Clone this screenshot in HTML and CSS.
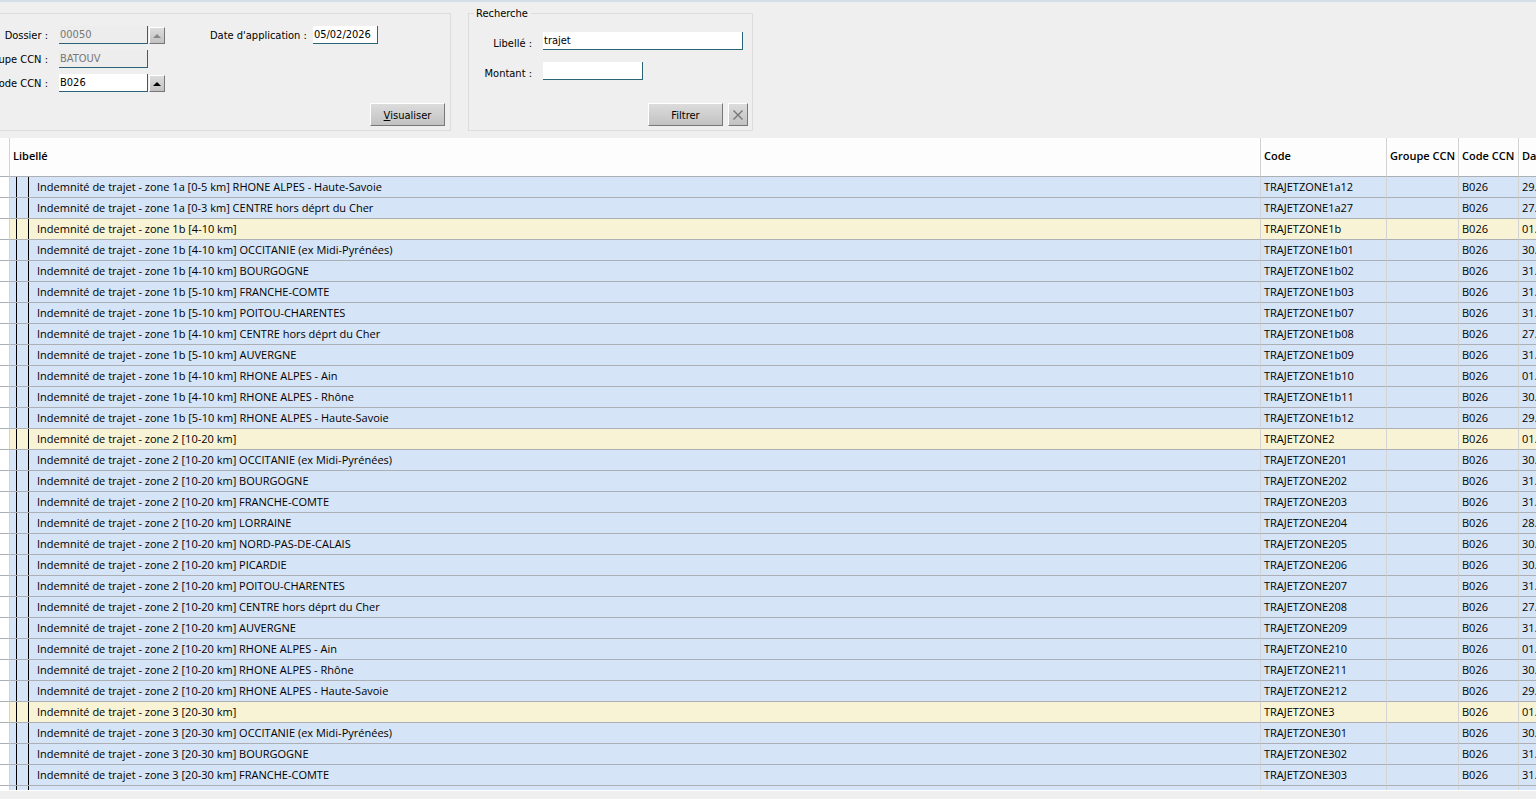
FILE: index.html
```
<!DOCTYPE html>
<html lang="fr">
<head>
    <meta charset="UTF-8">
    <meta name="viewport" content="width=device-width, initial-scale=1.0">
    <title>Convention collective</title>
    <link rel="stylesheet" href="styles.css">
</head>
<body>

    <!-- Critères -->
    <form class="filters">
        <fieldset class="panel panel-dossier">
            <div class="columns">
                <div class="fields">
                    <div class="field">
                        <label for="dossier">Dossier :</label>
                        <input type="text" id="dossier" value="00050" disabled>
                        <button type="button" class="btn pick" aria-label="Dossier" disabled><svg width="8" height="4" viewBox="0 0 8 4"><path d="M4 0l4 4H0z"/></svg></button>
                    </div>
                    <div class="field">
                        <label for="groupe">Groupe CCN :</label>
                        <input type="text" id="groupe" value="BATOUV" disabled>
                    </div>
                    <div class="field">
                        <label for="code">Code CCN :</label>
                        <input type="text" id="code" value="B026">
                        <button type="button" class="btn pick" aria-label="Code CCN"><svg width="8" height="4" viewBox="0 0 8 4"><path d="M4 0l4 4H0z"/></svg></button>
                    </div>
                </div>
                <div class="field field-date">
                    <label for="date">Date d'application :</label>
                    <input type="text" id="date" value="05/02/2026">
                </div>
            </div>
            <div class="actions">
                <button type="button" class="btn"><u>V</u>isualiser</button>
            </div>
        </fieldset>

        <fieldset class="panel panel-search">
            <legend>Recherche</legend>
            <div class="fields">
                <div class="field">
                    <label for="libelle">Libellé :</label>
                    <input type="text" id="libelle" value="trajet">
                </div>
                <div class="field">
                    <label for="montant">Montant :</label>
                    <input type="text" id="montant">
                </div>
            </div>
            <div class="actions">
                <button type="button" class="btn">Filtrer</button>
                <button type="button" class="btn clear" aria-label="Effacer"><svg width="10" height="10" viewBox="0 0 10 10"><path d="M.5.5l9 9M9.5.5l-9 9"/></svg></button>
            </div>
        </fieldset>
    </form>

    <!-- Liste des indemnités -->
    <div class="grid">
        <table>
            <colgroup>
                <col class="col-mark"><col><col class="col-code"><col class="col-groupe"><col class="col-ccn"><col class="col-date">
            </colgroup>
            <thead>
                <tr><th></th><th>Libellé</th><th>Code</th><th>Groupe CCN</th><th>Code CCN</th><th>Dat</th></tr>
            </thead>
            <tbody>
                <tr><td></td><td>Indemnité de trajet - zone 1a [0-5 km] RHONE ALPES - Haute-Savoie</td><td>TRAJETZONE1a12</td><td></td><td>B026</td><td>29.</td></tr>
                <tr><td></td><td>Indemnité de trajet - zone 1a [0-3 km] CENTRE hors déprt du Cher</td><td>TRAJETZONE1a27</td><td></td><td>B026</td><td>27.</td></tr>
                <tr class="main"><td></td><td>Indemnité de trajet - zone 1b [4-10 km]</td><td>TRAJETZONE1b</td><td></td><td>B026</td><td>01.</td></tr>
                <tr><td></td><td>Indemnité de trajet - zone 1b [4-10 km] OCCITANIE (ex Midi-Pyrénées)</td><td>TRAJETZONE1b01</td><td></td><td>B026</td><td>30.</td></tr>
                <tr><td></td><td>Indemnité de trajet - zone 1b [4-10 km] BOURGOGNE</td><td>TRAJETZONE1b02</td><td></td><td>B026</td><td>31.</td></tr>
                <tr><td></td><td>Indemnité de trajet - zone 1b [5-10 km] FRANCHE-COMTE</td><td>TRAJETZONE1b03</td><td></td><td>B026</td><td>31.</td></tr>
                <tr><td></td><td>Indemnité de trajet - zone 1b [5-10 km] POITOU-CHARENTES</td><td>TRAJETZONE1b07</td><td></td><td>B026</td><td>31.</td></tr>
                <tr><td></td><td>Indemnité de trajet - zone 1b [4-10 km] CENTRE hors déprt du Cher</td><td>TRAJETZONE1b08</td><td></td><td>B026</td><td>27.</td></tr>
                <tr><td></td><td>Indemnité de trajet - zone 1b [5-10 km] AUVERGNE</td><td>TRAJETZONE1b09</td><td></td><td>B026</td><td>31.</td></tr>
                <tr><td></td><td>Indemnité de trajet - zone 1b [4-10 km] RHONE ALPES - Ain</td><td>TRAJETZONE1b10</td><td></td><td>B026</td><td>01.</td></tr>
                <tr><td></td><td>Indemnité de trajet - zone 1b [4-10 km] RHONE ALPES - Rhône</td><td>TRAJETZONE1b11</td><td></td><td>B026</td><td>30.</td></tr>
                <tr><td></td><td>Indemnité de trajet - zone 1b [5-10 km] RHONE ALPES - Haute-Savoie</td><td>TRAJETZONE1b12</td><td></td><td>B026</td><td>29.</td></tr>
                <tr class="main"><td></td><td>Indemnité de trajet - zone 2 [10-20 km]</td><td>TRAJETZONE2</td><td></td><td>B026</td><td>01.</td></tr>
                <tr><td></td><td>Indemnité de trajet - zone 2 [10-20 km] OCCITANIE (ex Midi-Pyrénées)</td><td>TRAJETZONE201</td><td></td><td>B026</td><td>30.</td></tr>
                <tr><td></td><td>Indemnité de trajet - zone 2 [10-20 km] BOURGOGNE</td><td>TRAJETZONE202</td><td></td><td>B026</td><td>31.</td></tr>
                <tr><td></td><td>Indemnité de trajet - zone 2 [10-20 km] FRANCHE-COMTE</td><td>TRAJETZONE203</td><td></td><td>B026</td><td>31.</td></tr>
                <tr><td></td><td>Indemnité de trajet - zone 2 [10-20 km] LORRAINE</td><td>TRAJETZONE204</td><td></td><td>B026</td><td>28.</td></tr>
                <tr><td></td><td>Indemnité de trajet - zone 2 [10-20 km] NORD-PAS-DE-CALAIS</td><td>TRAJETZONE205</td><td></td><td>B026</td><td>30.</td></tr>
                <tr><td></td><td>Indemnité de trajet - zone 2 [10-20 km] PICARDIE</td><td>TRAJETZONE206</td><td></td><td>B026</td><td>30.</td></tr>
                <tr><td></td><td>Indemnité de trajet - zone 2 [10-20 km] POITOU-CHARENTES</td><td>TRAJETZONE207</td><td></td><td>B026</td><td>31.</td></tr>
                <tr><td></td><td>Indemnité de trajet - zone 2 [10-20 km] CENTRE hors déprt du Cher</td><td>TRAJETZONE208</td><td></td><td>B026</td><td>27.</td></tr>
                <tr><td></td><td>Indemnité de trajet - zone 2 [10-20 km] AUVERGNE</td><td>TRAJETZONE209</td><td></td><td>B026</td><td>31.</td></tr>
                <tr><td></td><td>Indemnité de trajet - zone 2 [10-20 km] RHONE ALPES - Ain</td><td>TRAJETZONE210</td><td></td><td>B026</td><td>01.</td></tr>
                <tr><td></td><td>Indemnité de trajet - zone 2 [10-20 km] RHONE ALPES - Rhône</td><td>TRAJETZONE211</td><td></td><td>B026</td><td>30.</td></tr>
                <tr><td></td><td>Indemnité de trajet - zone 2 [10-20 km] RHONE ALPES - Haute-Savoie</td><td>TRAJETZONE212</td><td></td><td>B026</td><td>29.</td></tr>
                <tr class="main"><td></td><td>Indemnité de trajet - zone 3 [20-30 km]</td><td>TRAJETZONE3</td><td></td><td>B026</td><td>01.</td></tr>
                <tr><td></td><td>Indemnité de trajet - zone 3 [20-30 km] OCCITANIE (ex Midi-Pyrénées)</td><td>TRAJETZONE301</td><td></td><td>B026</td><td>30.</td></tr>
                <tr><td></td><td>Indemnité de trajet - zone 3 [20-30 km] BOURGOGNE</td><td>TRAJETZONE302</td><td></td><td>B026</td><td>31.</td></tr>
                <tr><td></td><td>Indemnité de trajet - zone 3 [20-30 km] FRANCHE-COMTE</td><td>TRAJETZONE303</td><td></td><td>B026</td><td>31.</td></tr>
                <tr><td></td><td></td><td></td><td></td><td></td><td></td></tr>
            </tbody>
        </table>
    </div>

</body>
</html>
```
FILE: styles.css
```
* {
    box-sizing: border-box;
}
body {
    display: flex;
    flex-direction: column;
    height: 100vh;
    margin: 0;
    padding-bottom: 8px;
    border-top: 2px solid #d5dfe8;
    background-color: #efefef;
    color: #000;
    font-family: Tahoma, "DejaVu Sans Condensed", sans-serif;
    font-size: 11px;
    overflow: hidden;
}

/* Critères */
.filters {
    display: flex;
    align-items: flex-end;
    gap: 17px;
    padding: 4px 0 7px;
}
.panel {
    min-width: 0;
    margin: 0;
    border: 1px solid #dcdcdc;
}
.panel-dossier {
    width: 451px;
    padding: 12px 5px 4px 0;
    border-left: none;
}
.panel-search {
    width: 285px;
    padding: 11px 4px 4px 6px;
}
legend {
    margin-left: -1px;
    padding: 0 3px 0 2px;
    line-height: 15px;
}
.columns {
    display: flex;
    align-items: flex-start;
    gap: 45px;
}
.fields {
    display: flex;
    flex-direction: column;
    gap: 6px;
}
.field {
    display: flex;
    align-items: center;
}
.field label {
    display: flex;
    justify-content: flex-end;
    width: 48px;
    margin-right: 11px;
    white-space: nowrap;
}
.field-date label {
    width: auto;
    margin-right: 6px;
}
.panel-search .field {
    align-items: flex-start;
    height: 24px;
}
.panel-search .field label {
    width: 57px;
    line-height: 24px;
}
input {
    width: 89px;
    height: 18px;
    padding: 0 1px;
    border: 0 solid #2a6577;
    border-width: 0 1px 1px 0;
    border-radius: 0;
    background-color: #fff;
    color: #000;
    font: inherit;
}
input:disabled {
    background-color: #ededed;
    color: #777;
}
#date {
    width: 65px;
}
#libelle {
    width: 200px;
}
#montant {
    width: 100px;
}
.actions {
    display: flex;
    justify-content: flex-end;
    gap: 5px;
    margin-top: 11px;
}
.panel-search .actions {
    margin-top: 17px;
}
.btn {
    display: flex;
    align-items: center;
    justify-content: center;
    width: 75px;
    height: 23px;
    padding: 1px 0 0;
    border: 1px solid #fff;
    border-right-color: #777;
    border-bottom-color: #777;
    border-radius: 0;
    background-image: linear-gradient(#dcdcdc, #c2c2c2);
    color: #000;
    font: inherit;
    white-space: pre;
}
.btn.pick {
    width: 16px;
    height: 17px;
    margin-left: 1px;
}
.btn.clear {
    width: 20px;
}
.pick:disabled path {
    fill: #888;
}
.clear path {
    fill: none;
    stroke: #777;
    stroke-width: 1.4;
}

/* Liste */
.grid {
    flex: 1;
    min-height: 0;
    border-bottom: 1px solid #fff;
    font-family: "Trebuchet MS", "Open Sans", sans-serif;
    overflow: hidden;
}
table {
    width: 100%;
    table-layout: fixed;
    border-spacing: 0;
}
.col-mark {
    width: 10px;
}
.col-code {
    width: 126px;
}
.col-groupe {
    width: 72px;
}
.col-ccn {
    width: 60px;
}
.col-date {
    width: 17px;
}
th,
td {
    height: 21px;
    padding: 0 0 0 3px;
    border-right: 1px solid #d3d3d3;
    border-bottom: 1px solid #acb0b5;
    line-height: 20px;
    text-align: left;
    white-space: nowrap;
    overflow: hidden;
}
th {
    height: 39px;
    padding-bottom: 2px;
    background-color: #fdfdfd;
    font-weight: 600;
}
td {
    background-color: #d5e4f6;
}
.main td {
    background-color: #f7f3d4;
}
tr td:first-child {
    background-color: #fff;
}
th:last-child,
td:last-child {
    border-right: none;
}
/* lignes de l'arborescence */
td:nth-child(2) {
    padding-left: 27px;
    background-image: linear-gradient(#000, #000), linear-gradient(#000, #000);
    background-position: 6px 0, 18px 0;
    background-repeat: no-repeat;
    background-size: 1px 100%;
}
```
